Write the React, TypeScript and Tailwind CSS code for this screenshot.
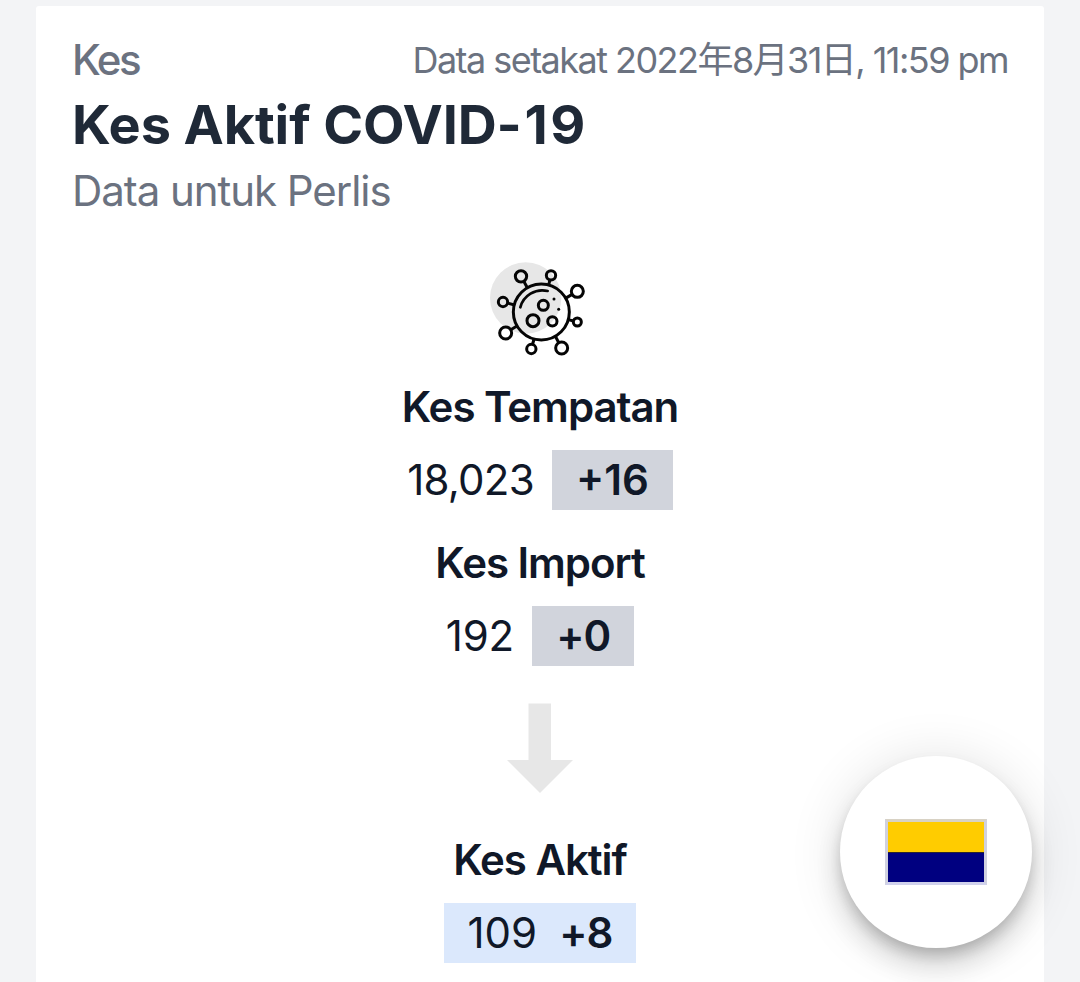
import React from 'react'

type CaseRowProps = {
  title: string
  total: string
  change: string
}

const CaseRow = ({ title, total, change }: CaseRowProps) => (
  <div className="flex flex-col items-center">
    <h3 className="text-[42px] leading-[60px] font-semibold tracking-[-1.05px] whitespace-nowrap">
      {title}
    </h3>
    <div className="mt-[13px] flex items-center gap-[18px] text-[42px] leading-[60px]">
      <span className={total.length > 3 ? 'tracking-[-0.75px]' : 'tracking-[-0.1px]'}>
        {total}
      </span>
      <span
        className={`bg-[#d1d4dc] px-6 font-semibold ${
          change.length > 2 ? 'tracking-[0px]' : 'tracking-[-0.9px]'
        }`}
      >
        {change}
      </span>
    </div>
  </div>
)

const spikes = [
  { cx: 123, cy: 64, r: 17, x: 142, y: 98 },
  { cx: 213, cy: 61, r: 14, x: 206, y: 90 },
  { cx: 292, cy: 109, r: 18, x: 256, y: 130 },
  { cx: 292, cy: 201, r: 12, x: 265, y: 194 },
  { cx: 245, cy: 279, r: 18, x: 226, y: 244 },
  { cx: 154, cy: 282, r: 14, x: 162, y: 252 },
  { cx: 77, cy: 234, r: 18, x: 111, y: 213 },
  { cx: 69, cy: 141, r: 14, x: 104, y: 150 },
]

const VirusIcon = () => (
  <svg width="120" height="110" viewBox="0 0 360 330" fill="none">
    <circle cx="137" cy="129" r="107" fill="#e7e7e7" />
    <g stroke="#050505" strokeWidth="9">
      <circle cx="184" cy="171" r="84" />
      {spikes.map(({ cx, cy, r, x, y }) => {
        const d = Math.hypot(x - cx, y - cy)
        return (
          <g key={`${cx}-${cy}`}>
            <circle cx={cx} cy={cy} r={r} />
            <line
              x1={cx + ((x - cx) * r) / d}
              y1={cy + ((y - cy) * r) / d}
              x2={x}
              y2={y}
            />
          </g>
        )
      })}
      <path d="M121 157C130 122 166 99 203 108" strokeLinecap="round" strokeWidth="8" />
      <circle cx="190" cy="151" r="15" />
      <circle cx="159" cy="197" r="18" />
      <circle cx="217" cy="199" r="14" />
    </g>
    <circle cx="222" cy="132" r="4.5" fill="#050505" />
    <circle cx="236" cy="163" r="4.5" fill="#050505" />
  </svg>
)

const App = () => {
  return (
    <div className="h-[982px] overflow-hidden bg-[#f3f4f6] px-9 pt-1.5 font-['Inter','Noto_Sans_CJK_JP',sans-serif] text-gray-900">
      <main className="h-[1000px] rounded-[3px] bg-white px-9 pt-[23px]">
        <header className="text-[#6b7280]">
          <div className="flex items-center justify-between">
            <span className="pt-0.5 text-[42px] leading-[58px] font-medium tracking-[-2.4px]">
              Kes
            </span>
            <span className="pt-0.5 text-[36px] leading-[58px] tracking-[-1.54px] whitespace-nowrap">
              Data setakat 2022年8月31日, 11:59 pm
            </span>
          </div>
          <h1 className="-mt-1.5 text-[54px] leading-[84px] font-bold tracking-[-0.1px] text-[#1f2937]">
            Kes Aktif COVID<span className="tracking-[2.6px]">-19</span>
          </h1>
          <p className="-mt-1.5 text-[42px] leading-[60px] tracking-[-1.05px]">
            Data untuk Perlis
          </p>
        </header>

        <div className="flex flex-col items-center pt-[34px]">
          <VirusIcon />
          <div className="mt-3 flex flex-col items-center gap-[23px]">
            <CaseRow title="Kes Tempatan" total="18,023" change="+16" />
            <CaseRow title="Kes Import" total="192" change="+0" />
          </div>
          <svg
            className="mt-[37px]"
            width="66"
            height="90"
            viewBox="0 0 66 90"
            fill="#e7e7e7"
          >
            <path d="M21.5 0.5H44V57H66L33 90L0 57H21.5Z" />
          </svg>
          <h3 className="mt-[37px] text-[42px] leading-[60px] font-semibold tracking-[-1.05px]">
            Kes Aktif
          </h3>
          <div className="mt-[13px] flex gap-[22px] bg-[#dbe8fc] px-6 text-[42px] leading-[60px]">
            <span>109</span>
            <span className="font-semibold tracking-[-0.9px]">+8</span>
          </div>
        </div>
      </main>

      <button
        type="button"
        aria-label="Perlis"
        className="fixed top-[756px] left-[840px] flex h-48 w-48 items-center justify-center rounded-full bg-white shadow-[0_9px_15px_-3px_rgba(0,0,0,0.2),0_18px_30px_0_rgba(0,0,0,0.14),0_3px_54px_0_rgba(0,0,0,0.12)]"
      >
        <span className="flex h-[66px] w-[102px] flex-col border-3 border-t-[#d8d2c4] border-r-[#d0d1df] border-b-[#d0d1ec] border-l-[#d0d1df]">
          <span className="flex-1 bg-[#ffcc00]" />
          <span className="flex-1 border-t border-[#2a2530] bg-[#000080]" />
        </span>
      </button>
    </div>
  )
}

export default App
